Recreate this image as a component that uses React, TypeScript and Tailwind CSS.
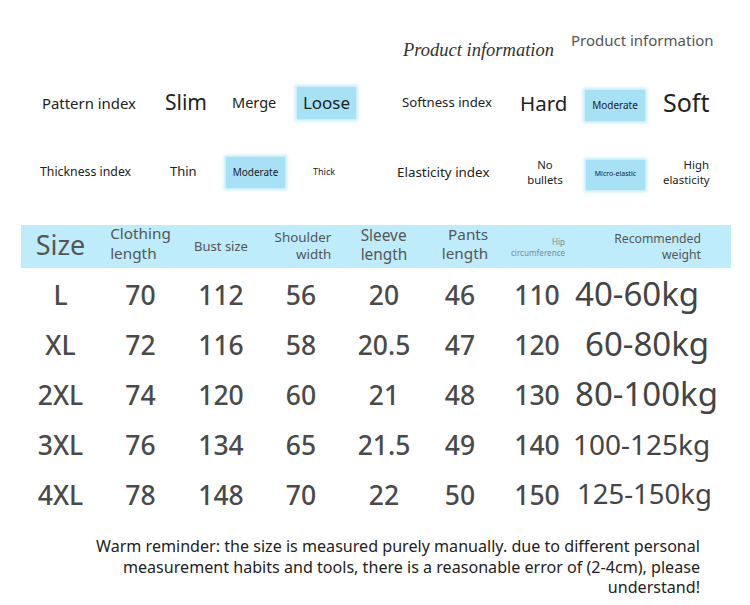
import React from "react";

const rows = [
  { s: "L", c: "70", b: "112", sh: "56", sl: "20", p: "46", h: "110", w: "40-60kg", ws: "text-[33px]", wp: "pl-[5px]" },
  { s: "XL", c: "72", b: "116", sh: "58", sl: "20.5", p: "47", h: "120", w: "60-80kg", ws: "text-[33px]", wp: "pl-[15px]" },
  { s: "2XL", c: "74", b: "120", sh: "60", sl: "21", p: "48", h: "130", w: "80-100kg", ws: "text-[33px]", wp: "pl-[5px]" },
  { s: "3XL", c: "76", b: "134", sh: "65", sl: "21.5", p: "49", h: "140", w: "100-125kg", ws: "text-[28px]", wp: "pl-[3px]" },
  { s: "4XL", c: "78", b: "148", sh: "70", sl: "22", p: "50", h: "150", w: "125-150kg", ws: "text-[27.5px]", wp: "pl-[7px]" },
];

const box = "flex items-center justify-center bg-[#a6e1f6] shadow-[0_0_3px_2px_#c4ecfa]";

export default function App() {
  return (
    <div className="w-[750px] h-[605px] bg-white font-['Noto_Sans',sans-serif] text-[#222] overflow-hidden">
      {/* top title */}
      <div className="flex h-[80px] items-start">
        <div className="ml-[403px] mt-[38px] font-['Liberation_Serif',serif] italic text-[18.5px] leading-[24px] text-[#333]">
          Product information
        </div>
        <div className="ml-[17px] mt-[30px] text-[15px] leading-[20px] text-[#555]">Product information</div>
      </div>

      {/* row 1 */}
      <div className="flex h-[46px] items-center whitespace-nowrap">
        <div className="ml-[42px] w-[123px] text-[14.9px]">Pattern index</div>
        <div className="w-[67px] text-[21px]">Slim</div>
        <div className="w-[65px] text-[14.5px]">Merge</div>
        <div className="w-[105px]">
          <div className={`${box} w-[59px] h-[32px] text-[17px]`}>Loose</div>
        </div>
        <div className="w-[118px] text-[13.2px]">Softness index</div>
        <div className="w-[65px] text-[20.5px]">Hard</div>
        <div className="w-[78px] pt-[4px]">
          <div className={`${box} w-[60px] h-[31px] text-[10px]`}>Moderate</div>
        </div>
        <div className="text-[25px]">Soft</div>
      </div>

      {/* row 2 */}
      <div className="mt-[23px] flex h-[46px] items-center whitespace-nowrap">
        <div className="ml-[40px] w-[130px] text-[12.3px]">Thickness index</div>
        <div className="w-[56px] text-[13px]">Thin</div>
        <div className="w-[87px]">
          <div className={`${box} w-[59px] h-[31px] text-[10px]`}>Moderate</div>
        </div>
        <div className="w-[84px] text-[9px]">Thick</div>
        <div className="w-[130px] text-[13.4px]">Elasticity index</div>
        <div className="w-[59px] text-center text-[11.3px] leading-[15px] -mt-[1px]">
          <div className="w-[36px]">No</div>
          <div className="w-[36px]">bullets</div>
        </div>
        <div className="w-[77px] pt-[5px]">
          <div className={`${box} w-[59px] h-[30px] text-[7px]`}>Micro-elastic</div>
        </div>
        <div className="w-[46px] text-right text-[11.4px] leading-[15px]">
          <div>High</div>
          <div>elasticity</div>
        </div>
      </div>

      {/* table */}
      <div className="mt-[30px] ml-[21px] w-[710px]">
        <div className="grid grid-cols-[79px_81px_80px_80px_81px_76px_72px_161px] h-[43px] bg-[#bfecfb] text-[#555] items-center">
          <div className="flex justify-center text-[27px] leading-[30px] -mt-[3px]">Size</div>
          <div className="flex justify-center -mt-[7px]">
            <div className="text-left text-[15.3px] leading-[20px]">
              <div>Clothing</div>
              <div>length</div>
            </div>
          </div>
          <div className="flex justify-center text-[13px]">Bust size</div>
          <div className="flex justify-center pl-[4px] -mt-[2px]">
            <div className="text-right text-[13.4px] leading-[17px]">
              <div>Shoulder</div>
              <div>width</div>
            </div>
          </div>
          <div className="flex justify-center pl-[5px] -mt-[4px]">
            <div className="text-left text-[15.4px] leading-[19px]">
              <div>Sleeve</div>
              <div>length</div>
            </div>
          </div>
          <div className="flex justify-center pl-[10px] -mt-[6px]">
            <div className="text-right text-[15.3px] leading-[19px]">
              <div>Pants</div>
              <div>length</div>
            </div>
          </div>
          <div className="flex justify-center pl-[8px]">
            <div className="text-right text-[8.1px] leading-[11px] text-[#7d8b92]">
              <div>Hip</div>
              <div>circumference</div>
            </div>
          </div>
          <div className="flex justify-end pr-[30px]">
            <div className="text-right text-[12.2px] leading-[16px]">
              <div>Recommended</div>
              <div>weight</div>
            </div>
          </div>
        </div>
        <div className="pt-[3px]">
          {rows.map((r) => (
            <div
              key={r.s}
              className="grid grid-cols-[79px_81px_80px_80px_81px_76px_72px_161px] h-[50px] items-center text-[#4a4a4a] text-[26.5px] font-medium"
            >
              <div className="text-center">{r.s}</div>
              <div className="text-center">{r.c}</div>
              <div className="text-center">{r.b}</div>
              <div className="text-center">{r.sh}</div>
              <div className="text-center pl-[5px]">{r.sl}</div>
              <div className="text-center">{r.p}</div>
              <div className="text-center pl-[6px]">{r.h}</div>
              <div className={`${r.wp} ${r.ws} -mt-[4px] font-normal text-[#444] whitespace-nowrap`}>{r.w}</div>
            </div>
          ))}
        </div>
      </div>

      {/* reminder */}
      <div className="mt-[15px] flex justify-end pr-[50px]">
        <div className="text-right text-[16.1px] leading-[20.5px] text-[#222] whitespace-nowrap">
          <div>Warm reminder: the size is measured purely manually. due to different personal</div>
          <div>measurement habits and tools, there is a reasonable error of (2-4cm), please</div>
          <div>understand!</div>
        </div>
      </div>
    </div>
  );
}
